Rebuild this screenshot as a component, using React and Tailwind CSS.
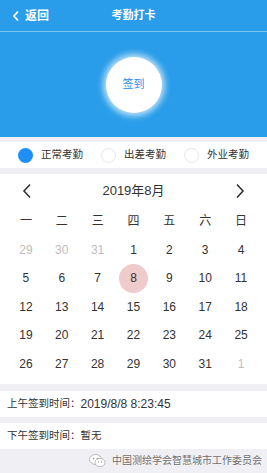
import { useState } from "react";

const font = { fontFamily: '"Liberation Sans", "Noto Sans CJK SC", sans-serif' };

const weekdays = ["一", "二", "三", "四", "五", "六", "日"];

const days = [
  [29, 30, 31, 1, 2, 3, 4],
  [5, 6, 7, 8, 9, 10, 11],
  [12, 13, 14, 15, 16, 17, 18],
  [19, 20, 21, 22, 23, 24, 25],
  [26, 27, 28, 29, 30, 31, 1],
];

function Chevron({ dir }) {
  return (
    <svg width="10" height="16" viewBox="0 0 10 16" fill="none">
      <path
        d={dir === "left" ? "M8 1.5 L2 8 L8 14.5" : "M2 1.5 L8 8 L2 14.5"}
        stroke="#333"
        strokeWidth="1.6"
      />
    </svg>
  );
}

function Radio({ checked, label, onClick }) {
  return (
    <button onClick={onClick} className="flex items-center gap-2">
      <span
        className={`h-[15px] w-[15px] rounded-full ${
          checked ? "bg-[#1e8ff5]" : "border border-[#e4e6ec] bg-white"
        }`}
      />
      <span className="text-[10.5px] text-[#333]">{label}</span>
    </button>
  );
}

export default function App() {
  const [type, setType] = useState(0);
  const modes = ["正常考勤", "出差考勤", "外业考勤"];

  return (
    <div style={font} className="flex h-[473px] w-[267px] flex-col bg-[#efeff4]">
      <header className="relative flex h-[32px] items-center border-b border-[#7cc3f2] bg-[#299de9] text-white">
        <div className="flex items-center gap-[5px] pl-[12px]">
          <svg width="8" height="12" viewBox="0 0 8 12" fill="none">
            <path d="M6 1.5 L2 6 L6 10.5" stroke="white" strokeWidth="1.8" />
          </svg>
          <span className="text-[12px] font-bold">返回</span>
        </div>
        <h1 className="absolute left-1/2 -translate-x-1/2 text-[11px] font-bold">考勤打卡</h1>
      </header>

      <div className="flex h-[105px] items-center justify-center bg-[#299de9]">
        <button className="flex h-[56px] w-[56px] items-center justify-center rounded-full bg-white text-[11px] text-[#2a8ce8] shadow-[0_0_6px_3px_rgba(255,255,255,0.7)]">
          签到
        </button>
      </div>

      <div className="mt-[5px] flex h-[26px] items-center bg-white pl-[18px]">
        {modes.map((m, i) => (
          <div key={m} className="w-[83px]">
            <Radio checked={type === i} label={m} onClick={() => setType(i)} />
          </div>
        ))}
      </div>

      <section className="mt-[6px] bg-white px-[8px] pb-[6px]">
        <div className="flex h-[33px] items-center justify-between px-[14px]">
          <Chevron dir="left" />
          <span className="text-[13px] text-[#333]">2019年8月</span>
          <Chevron dir="right" />
        </div>
        <div className="grid h-[28px] grid-cols-7 items-center text-center text-[12px] text-[#333]">
          {weekdays.map((w) => (
            <span key={w}>{w}</span>
          ))}
        </div>
        {days.map((row, r) => (
          <div key={r} className="grid h-[28.5px] grid-cols-7 items-center text-center text-[12px]">
            {row.map((d, c) => {
              const muted = (r === 0 && d > 20) || (r === 4 && d < 10);
              const today = r === 1 && d === 8;
              return (
                <div key={c} className="flex justify-center">
                  <span
                    className={`flex h-[29px] w-[29px] items-center justify-center rounded-full ${
                      today ? "bg-[#f0cbcb]" : ""
                    } ${muted ? "text-[#bdbdbd]" : "text-[#333]"}`}
                  >
                    {d}
                  </span>
                </div>
              );
            })}
          </div>
        ))}
      </section>

      <div className="mt-[7px] flex h-[26px] items-center bg-white pl-[7px] text-[10.5px] text-[#333]">
        上午签到时间：<span className="text-[12px]">2019/8/8 8:23:45</span>
      </div>
      <div className="mt-[6px] flex h-[26px] items-center bg-white pl-[7px] text-[10.5px] text-[#333]">
        下午签到时间：暂无
      </div>

      <div className="flex flex-1 items-center justify-end gap-[6px] pr-[5px]">
        <svg width="17" height="14" viewBox="0 0 17 14" fill="none">
          <ellipse cx="6.5" cy="5.5" rx="6" ry="5" fill="#fff" stroke="#aaa" strokeWidth="0.8" />
          <ellipse cx="11" cy="8.5" rx="5" ry="4.2" fill="#fff" stroke="#aaa" strokeWidth="0.8" />
          <circle cx="4.5" cy="4.5" r="0.8" fill="#999" />
          <circle cx="8.5" cy="4.5" r="0.8" fill="#999" />
          <circle cx="9.5" cy="8" r="0.7" fill="#999" />
          <circle cx="12.5" cy="8" r="0.7" fill="#999" />
        </svg>
        <span className="text-[10px] text-[#6e6e6e] [text-shadow:0_0_2px_#fff]">
          中国测绘学会智慧城市工作委员会
        </span>
      </div>
    </div>
  );
}
